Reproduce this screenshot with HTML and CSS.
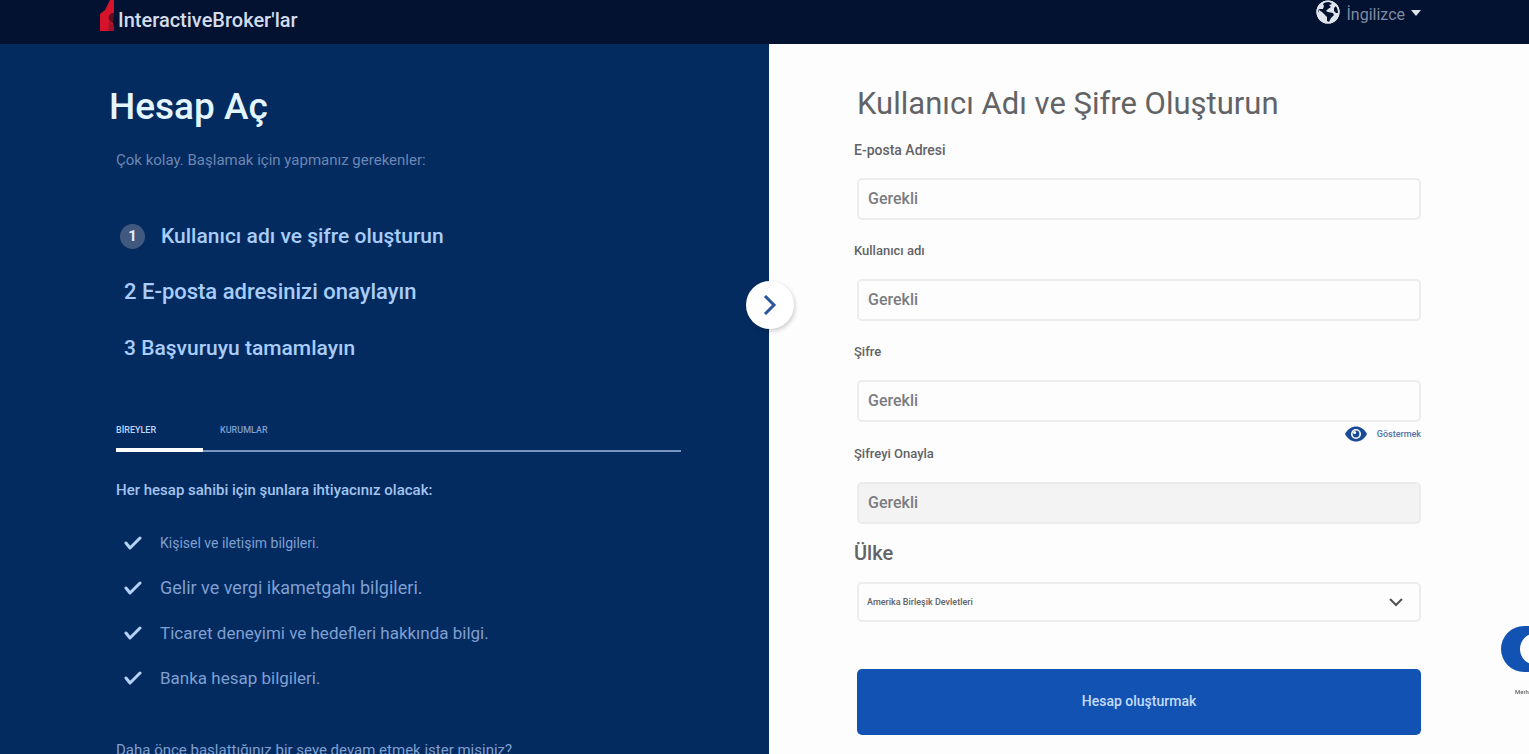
FILE: index.html
```html
<!DOCTYPE html>
<html lang="tr">

<head>
    <meta charset="UTF-8">
    <meta name="viewport" content="width=device-width, initial-scale=1.0">
    <title>Hesap Aç</title>
    <link rel="stylesheet" href="styles.css">
</head>

<body>
    <header class="ust">
        <a class="logo" href="#">
            <svg class="alev" viewBox="0 0 17 32" aria-hidden="true">
                <path d="M11 0 L15 0 L15 13 C10 14 9 20 14 23 L15 31 L1 31 L1 14 L6 10 Z" fill="#d5142b" />
                <path d="M15 13 C8 13 8 21 14 23 Z" fill="#5d1026" />
                <path d="M10 21 L15 26 L15 31 L9 31 Z" fill="#a51228" />
            </svg>
            <span>InteractiveBroker'lar</span>
        </a>
        <button class="dil" type="button">
            <svg class="dunya" viewBox="0 0 24 24" aria-hidden="true">
                <circle cx="12" cy="12" r="11.5" fill="#dfe4ec" />
                <path d="M9 2 L14 2 L16 4 L13 5 L15 7 L12 9 L10 11 L12 12 L17 13 L18 15 L15 18 L13 22 L11 21 L11 17 L8 14 L6 12 L3 10 L2 13 L1 10 L4 9 L7 9 L8 6 L7 4 Z" fill="#031230" />
                <path d="M20 6 L22 9 L22 13 L20 13 L18 11 L18 8 Z" fill="#031230" />
                <circle cx="12" cy="12" r="10.8" fill="none" stroke="#dfe4ec" stroke-width="1.6" />
            </svg>
            <span>İngilizce</span>
            <svg class="ok" viewBox="0 0 10 6" aria-hidden="true"><path d="M0 0 H10 L5 6 Z" fill="#dfe4ec" /></svg>
        </button>
    </header>

    <main class="icerik">
        <section class="sol">
            <h1>Hesap Aç</h1>
            <p class="alt-baslik">Çok kolay. Başlamak için yapmanız gerekenler:</p>

            <ol class="adimlar">
                <li class="aktif"><span class="no">1</span>Kullanıcı adı ve şifre oluşturun</li>
                <li class="siradaki">2 E-posta adresinizi onaylayın</li>
                <li>3 Başvuruyu tamamlayın</li>
            </ol>

            <div class="sekmeler">
                <button class="sekme secili" type="button">BİREYLER</button>
                <button class="sekme" type="button">KURUMLAR</button>
            </div>

            <p class="gerekli">Her hesap sahibi için şunlara ihtiyacınız olacak:</p>

            <ul class="liste">
                <li class="kucuk"><svg viewBox="0 0 18 14" aria-hidden="true"><path d="M2 7 L6 12 L16 2" /></svg>Kişisel ve iletişim bilgileri.</li>
                <li class="buyuk"><svg viewBox="0 0 18 14" aria-hidden="true"><path d="M2 7 L6 12 L16 2" /></svg>Gelir ve vergi ikametgahı bilgileri.</li>
                <li><svg viewBox="0 0 18 14" aria-hidden="true"><path d="M2 7 L6 12 L16 2" /></svg>Ticaret deneyimi ve hedefleri hakkında bilgi.</li>
                <li><svg viewBox="0 0 18 14" aria-hidden="true"><path d="M2 7 L6 12 L16 2" /></svg>Banka hesap bilgileri.</li>
            </ul>

            <p class="devam">Daha önce başlattığınız bir şeye devam etmek ister misiniz?</p>

            <button class="daralt" type="button" aria-label="Paneli daralt">
                <svg viewBox="0 0 14 20" aria-hidden="true"><path d="M2 1 L11 10 L2 19" /></svg>
            </button>
        </section>

        <section class="sag">
            <h2>Kullanıcı Adı ve Şifre Oluşturun</h2>
            <form>
                <div class="alan">
                    <label class="orta" for="eposta">E-posta Adresi</label>
                    <input id="eposta" type="email" placeholder="Gerekli">
                </div>
                <div class="alan">
                    <label for="kullanici">Kullanıcı adı</label>
                    <input id="kullanici" type="text" placeholder="Gerekli">
                </div>
                <div class="alan">
                    <label for="sifre">Şifre</label>
                    <input id="sifre" type="password" placeholder="Gerekli">
                    <button class="goster" type="button">
                        <svg viewBox="0 0 22 16" aria-hidden="true">
                            <path d="M0 8 C5 -2 17 -2 22 8 C17 18 5 18 0 8 Z" fill="#184a96" />
                            <circle cx="11" cy="8" r="5" fill="#fff" />
                            <circle cx="11" cy="8" r="3.4" fill="#184a96" />
                            <circle cx="9.6" cy="6.6" r="1.5" fill="#fff" />
                        </svg>
                        <span>Göstermek</span>
                    </button>
                </div>
                <div class="alan">
                    <label for="onay">Şifreyi Onayla</label>
                    <input id="onay" type="password" placeholder="Gerekli" disabled>
                </div>
                <div class="alan ulke">
                    <label for="ulke">Ülke</label>
                    <div class="secim">
                        <select id="ulke">
                            <option>Amerika Birleşik Devletleri</option>
                        </select>
                        <svg viewBox="0 0 14 9" aria-hidden="true"><path d="M1 1 L7 7 L13 1" /></svg>
                    </div>
                </div>
                <button class="gonder" type="submit">Hesap oluşturmak</button>
            </form>
        </section>
    </main>

    <div class="sohbet">
        <button type="button" aria-label="Sohbet"><span class="top"></span></button>
        <span class="selam">Merhaba</span>
    </div>
</body>

</html>
```
FILE: styles.css
```css
* {
    margin: 0;
    padding: 0;
    box-sizing: border-box;
}

html,
body {
    height: 100%;
    overflow: hidden;
}

body {
    display: flex;
    flex-direction: column;
    font-family: Roboto, "Noto Sans", sans-serif;
    font-weight: 500;
    color: #626366;
    background-color: #fdfdfd;
}

button,
input,
select {
    font: inherit;
    color: inherit;
    border: 0;
    background: none;
}

button {
    cursor: pointer;
}

ul,
ol {
    list-style: none;
}

/* Üst çubuk */
.ust {
    display: flex;
    flex: none;
    justify-content: space-between;
    align-items: flex-start;
    height: 44px;
    padding: 0 108px 0 99px;
    background-color: #031230;
}

.logo {
    display: flex;
    gap: 2px;
    color: #d3dcec;
    font-size: 20px;
    line-height: 40px;
    text-decoration: none;
}

.alev {
    width: 17px;
    height: 32px;
}

.dil {
    display: flex;
    align-items: center;
    gap: 6px;
    font-size: 16px;
    font-weight: 400;
    line-height: 30px;
    color: #7f8ba4;
}

.dunya {
    width: 24px;
    height: 24px;
    margin-bottom: 6px;
}

.ok {
    width: 10px;
    height: 6px;
    margin-bottom: 4px;
}

/* Sayfa */
.icerik {
    display: grid;
    flex: 1;
    grid-template-columns: 769fr 760fr;
    min-height: 0;
}

/* Sol panel */
.sol {
    position: relative;
    padding: 40px 88px 0 116px;
    color: #7f9fd0;
    background-color: #042b60;
}

h1 {
    margin-left: -7px;
    font-size: 37px;
    font-weight: 500;
    line-height: 46px;
    color: #e3f5ff;
}

.alt-baslik {
    margin-top: 20px;
    font-size: 15px;
    font-weight: 400;
    line-height: 20px;
    color: #6b86b2;
}

.adimlar {
    display: grid;
    gap: 28px;
    margin-top: 52px;
    padding-left: 8px;
    font-size: 21px;
    line-height: 28px;
    color: #a9cdfa;
}

.siradaki {
    font-size: 22px;
}

.aktif {
    display: flex;
    align-items: center;
    gap: 16px;
    margin-left: -4px;
}

.no {
    width: 25px;
    height: 25px;
    border-radius: 50%;
    font-size: 15px;
    font-weight: 700;
    line-height: 25px;
    text-align: center;
    color: #e3edfa;
    background-color: #42597f;
}

.sekmeler {
    display: flex;
    align-items: flex-start;
    margin-top: 60px;
    border-bottom: 2px solid #7896c2;
}

.sekme {
    height: 28px;
    padding-bottom: 12px;
    font-size: 9px;
    line-height: 16px;
    color: #7f9fd0;
}

.secili {
    width: 87px;
    height: 30px;
    margin-right: 17px;
    margin-bottom: -2px;
    padding-bottom: 10px;
    border-bottom: 4px solid #fff;
    text-align: left;
    color: #bcd6f8;
}

.gerekli {
    margin-top: 28px;
    font-size: 15px;
    line-height: 20px;
    color: #a3c3ee;
}

.liste {
    display: grid;
    gap: 21px;
    margin-top: 31px;
    padding-left: 8px;
    font-size: 17px;
    font-weight: 400;
    line-height: 24px;
}

.liste li {
    display: flex;
    align-items: center;
    gap: 18px;
}

.liste .kucuk {
    font-size: 14px;
}

.liste .buyuk {
    font-size: 18px;
}

.liste svg {
    width: 18px;
    height: 14px;
    fill: none;
    stroke: #b5d2f5;
    stroke-width: 3;
    stroke-linecap: round;
    stroke-linejoin: round;
}

.devam {
    margin-top: 50px;
    font-size: 15px;
    font-weight: 400;
    line-height: 20px;
}

.daralt {
    position: absolute;
    top: 237px;
    right: -25px;
    display: flex;
    align-items: center;
    justify-content: center;
    width: 48px;
    height: 48px;
    border-radius: 50%;
    background-color: #fff;
    box-shadow: 1px 2px 4px rgba(0, 0, 0, 0.2);
}

.daralt svg {
    width: 14px;
    height: 20px;
    fill: none;
    stroke: #2b559f;
    stroke-width: 3;
}

/* Sağ panel */
.sag {
    padding: 40px 108px 0 88px;
}

h2 {
    font-size: 31px;
    font-weight: 400;
    line-height: 40px;
}

form {
    display: flex;
    flex-direction: column;
    margin-top: 18px;
}

.alan {
    display: flex;
    flex-direction: column;
    margin-bottom: 23px;
}

.alan label {
    margin: 0 0 20px -3px;
    font-size: 13px;
    line-height: 16px;
}

.alan .orta {
    font-size: 14px;
}

.alan input,
.secim select {
    width: 100%;
    height: 42px;
    padding: 0 9px 2px;
    border: 2px solid #ececed;
    border-radius: 5px;
    background-color: #fdfdfd;
    font-size: 16px;
}

.alan input::placeholder {
    color: #7b7c7f;
    opacity: 1;
}

.alan input:disabled {
    background-color: #f3f3f3;
}

.goster {
    display: flex;
    align-items: center;
    align-self: flex-end;
    gap: 10px;
    height: 24px;
    margin-bottom: -23px;
    font-size: 9px;
    color: #5474a8;
}

.goster svg {
    width: 22px;
    height: 16px;
}

.ulke {
    margin: -6px 0 47px;
}

.ulke label {
    margin-bottom: 17px;
    font-size: 20px;
    line-height: 24px;
}

.secim {
    position: relative;
}

.secim select {
    height: 40px;
    padding: 0 8px;
    font-size: 9px;
    appearance: none;
}

.secim svg {
    position: absolute;
    top: 16px;
    right: 18px;
    width: 14px;
    height: 9px;
    fill: none;
    stroke: #505154;
    stroke-width: 2;
    pointer-events: none;
}

.gonder {
    height: 66px;
    padding-bottom: 2px;
    border-radius: 5px;
    font-size: 14px;
    color: #c3dbfb;
    background-color: #1252b3;
}

/* Sohbet */
.sohbet {
    position: fixed;
    top: 626px;
    right: -44px;
    width: 72px;
}

.sohbet button {
    display: block;
    width: 72px;
    height: 46px;
    padding-left: 19px;
    border-radius: 23px;
    background-color: #1252b3;
}

.top {
    display: block;
    width: 32px;
    height: 32px;
    border-radius: 50%;
    background-color: #fff;
}

.selam {
    display: block;
    margin-top: 16px;
    padding-left: 14px;
    font-size: 6px;
    line-height: 8px;
}
```
